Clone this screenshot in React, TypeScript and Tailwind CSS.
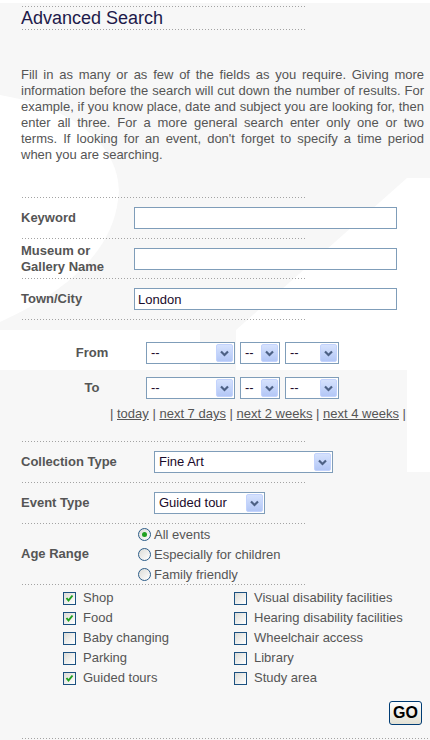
import React from 'react'

type Opt = { label: string; checked?: boolean }

const leftFacilities: Opt[] = [
  { label: 'Shop', checked: true },
  { label: 'Food', checked: true },
  { label: 'Baby changing' },
  { label: 'Parking' },
  { label: 'Guided tours', checked: true },
]

const rightFacilities: Opt[] = [
  { label: 'Visual disability facilities' },
  { label: 'Hearing disability facilities' },
  { label: 'Wheelchair access' },
  { label: 'Library' },
  { label: 'Study area' },
]

const ages: Opt[] = [
  { label: 'All events', checked: true },
  { label: 'Especially for children' },
  { label: 'Family friendly' },
]

// dotted separator, 1px dots every 3px
function Dots({ className = '' }: { className?: string }) {
  return (
    <div
      className={`h-px ml-px bg-[linear-gradient(to_right,#a3a3a3_1px,transparent_1px)] bg-[length:3px_1px] ${className}`}
    />
  )
}

function Sel({ value, className }: { value: string; className: string }) {
  return (
    <div className={`flex h-[22px] border border-[#7f9db9] bg-white ${className}`}>
      <span className="flex-1 pl-[4px] text-[13px] leading-[20px] text-[#1a0a2a] whitespace-nowrap overflow-hidden">{value}</span>
      <span className="m-px flex w-[17px] items-center justify-center rounded-[2px] border border-[#c3d3fd] bg-gradient-to-b from-[#d6e2fd] to-[#b3c7f6]">
        <svg width="9" height="7" viewBox="0 0 9 7">
          <path d="M1 1.5 L4.5 5 L8 1.5" fill="none" stroke="#4d6185" strokeWidth="2.2" />
        </svg>
      </span>
    </div>
  )
}

function Check({ checked }: { checked?: boolean }) {
  return (
    <span className="flex h-[13px] w-[13px] shrink-0 items-center justify-center border border-[#1c5180] bg-gradient-to-br from-[#dcdcd7] to-white">
      {checked && (
        <svg width="9" height="9" viewBox="0 0 9 9">
          <path d="M1.5 4 L3.5 6.5 L7.5 1.5" fill="none" stroke="#21a121" strokeWidth="2" />
        </svg>
      )}
    </span>
  )
}

function Radio({ checked }: { checked?: boolean }) {
  return (
    <span className="flex h-[13px] w-[13px] shrink-0 items-center justify-center rounded-full border border-[#2c5c88] bg-gradient-to-br from-[#dcdcd7] to-white">
      {checked && <span className="h-[5px] w-[5px] rounded-full bg-[#21a121]" />}
    </span>
  )
}

function Field({ label, value = '', tall }: { label: React.ReactNode; value?: string; tall?: boolean }) {
  return (
    <div className={`flex items-center ${tall ? 'h-[39px]' : 'h-[40px]'}`}>
      <div className="w-[113px] text-[13px] font-bold leading-[16px] text-[#555]">{label}</div>
      <input
        readOnly
        value={value}
        className="h-[22px] w-[263px] border border-[#7f9db9] bg-white px-[3px] text-[13px] text-[#1a0a2a] outline-none"
      />
    </div>
  )
}

export default function App() {
  return (
    <div className="relative min-h-[740px] w-[430px] overflow-hidden bg-[#f7f7f7] font-['Liberation_Sans',Arial,sans-serif]">
      {/* faint background swoosh */}
      <svg className="absolute inset-0" width="430" height="740" viewBox="0 0 430 740">
        <rect x="0" y="0" width="430" height="3" fill="#fff" />
        <path d="M0 95 C90 110 125 160 118 200 C112 250 70 290 0 322 Z" fill="#fff" />
        <path d="M407 178 L430 178 L430 330 L236 330 Z" fill="#fff" />
        <rect x="0" y="330" width="200" height="40" fill="#fff" />
        <rect x="236" y="330" width="194" height="40" fill="#fff" />
        <rect x="407" y="370" width="23" height="102" fill="#fff" />
      </svg>

      <div className="relative pl-[21px] pr-[6px]">
        <Dots className="mt-[6px] w-[284px]" />
        <h1 className="text-[18px] font-normal leading-[22px] text-[#1d1a4a]">Advanced Search</h1>
        <Dots className="w-[284px]" />

        <p className="mt-[37px] text-justify text-[13px] leading-[16px] text-[#555]">
          Fill in as many or as few of the fields as you require. Giving more information before the search will cut
          down the number of results. For example, if you know place, date and subject you are looking for, then enter
          all three. For a more general search enter only one or two terms. If looking for an event, don't forget to
          specify a time period when you are searching.
        </p>

        <Dots className="mt-[34px] w-[284px]" />
        <Field label="Keyword" />
        <Dots className="w-[284px]" />
        <Field label={<>Museum or<br />Gallery Name</>} tall />
        <Dots className="w-[284px]" />
        <Field label="Town/City" value="London" />
        <Dots className="w-[284px]" />

        {/* dates */}
        <div className="mt-[22px] flex items-center">
          <div className="w-[125px] pl-[17px] text-center text-[13px] font-bold text-[#555]">From</div>
          <div className="flex gap-[5px]">
            <Sel value="--" className="w-[89px]" />
            <Sel value="--" className="w-[40px]" />
            <Sel value="--" className="w-[54px]" />
          </div>
        </div>
        <div className="mt-[13px] flex items-center">
          <div className="w-[125px] pl-[17px] text-center text-[13px] font-bold text-[#555]">To</div>
          <div className="flex gap-[5px]">
            <Sel value="--" className="w-[89px]" />
            <Sel value="--" className="w-[40px]" />
            <Sel value="--" className="w-[54px]" />
          </div>
        </div>
        <div className="mt-[7px] pl-[89px] text-[13px] leading-[16px] text-[#555] whitespace-nowrap">
          | <a className="underline">today</a> | <a className="underline">next 7 days</a> |{' '}
          <a className="underline">next 2 weeks</a> | <a className="underline">next 4 weeks</a> |
        </div>

        <Dots className="mt-[19px] w-[284px]" />
        <div className="flex h-[40px] items-center">
          <div className="w-[133px] text-[13px] font-bold text-[#555]">Collection Type</div>
          <Sel value="Fine Art" className="w-[179px]" />
        </div>
        <Dots className="w-[284px]" />
        <div className="flex h-[40px] items-center">
          <div className="w-[133px] text-[13px] font-bold text-[#555]">Event Type</div>
          <Sel value="Guided tour" className="w-[111px]" />
        </div>
        <Dots className="w-[284px]" />
        <div className="flex h-[60px] items-center">
          <div className="w-[113px] text-[13px] font-bold text-[#555]">Age Range</div>
          <div className="flex flex-col pt-[1px]">
            {ages.map(a => (
              <label key={a.label} className="flex h-[20px] items-center gap-[3px] pl-[4px] text-[13px] text-[#555]">
                <Radio checked={a.checked} />
                {a.label}
              </label>
            ))}
          </div>
        </div>
        <Dots className="w-[284px]" />

        {/* facilities */}
        <div className="flex pt-[3px] pl-[42px]">
          <div className="w-[171px]">
            {leftFacilities.map(f => (
              <label key={f.label} className="flex h-[20px] items-center gap-[7px] text-[13px] text-[#555]">
                <Check checked={f.checked} />
                {f.label}
              </label>
            ))}
          </div>
          <div>
            {rightFacilities.map(f => (
              <label key={f.label} className="flex h-[20px] items-center gap-[7px] text-[13px] text-[#555] whitespace-nowrap">
                <Check checked={f.checked} />
                {f.label}
              </label>
            ))}
          </div>
        </div>

        <div className="mt-[13px] flex justify-end pr-[2px]">
          <button className="h-[24px] w-[33px] rounded-[3px] border border-[#003c74] bg-gradient-to-b from-white to-[#e3e1d4] text-[16px] font-bold leading-none text-black">
            GO
          </button>
        </div>
        <Dots className="mt-[13px] w-[409px]" />
      </div>
    </div>
  )
}
